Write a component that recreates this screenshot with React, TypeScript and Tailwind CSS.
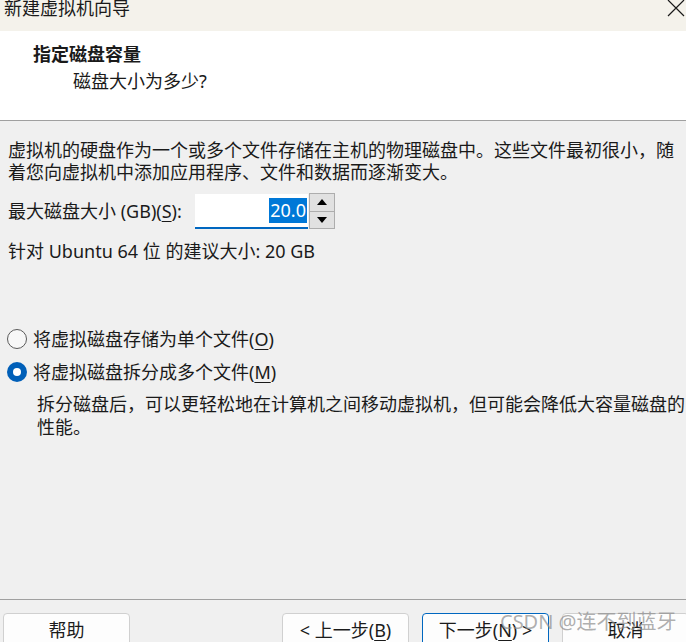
import React from "react";

const font = "font-['Noto_Sans','Noto_Sans_CJK_SC',sans-serif]";

function Mnemonic({ children }: { children: React.ReactNode }) {
  return <span className="underline underline-offset-[3px] decoration-1">{children}</span>;
}

function Radio({ checked, children }: { checked?: boolean; children: React.ReactNode }) {
  return (
    <div className="flex h-[22px] items-center">
      <span
        className={`ml-[7px] flex h-[20px] w-[20px] items-center justify-center rounded-full ${
          checked ? "bg-[#005fb8]" : "border border-[#5a5a5a] bg-[#f7f7f7]"
        }`}
      >
        {checked && <span className="h-[8px] w-[8px] rounded-full bg-white" />}
      </span>
      <span className="ml-[6px] whitespace-nowrap">{children}</span>
    </div>
  );
}

function WizardButton({
  children,
  focused = false,
}: {
  children: React.ReactNode;
  focused?: boolean;
}) {
  return (
    <button
      type="button"
      className={`flex h-[34px] w-[127px] shrink-0 items-center justify-center rounded-[4px] border bg-[#fdfdfd] text-[18px] leading-[22px] text-[#1b1b1b] ${
        focused ? "border-[#0067c0]" : "border-[#d0d0d0]"
      }`}
    >
      {children}
    </button>
  );
}

function SpinBox() {
  return (
    <div className="flex items-center">
      <div className="flex h-[35px] w-[113px] items-center justify-end border-b-2 border-[#0067c0] bg-white pr-[1px]">
        <span className="bg-[#0078d7] px-[1px] text-[18px] leading-[25px] text-white">20.0</span>
      </div>
      <div className="ml-[1px] flex h-[36px] w-[26px] flex-col border border-[#adadad] bg-[#e1e1e1]">
        <div className="flex flex-1 items-center justify-center border-b border-[#adadad]">
          <svg width="10" height="6" viewBox="0 0 10 6">
            <path d="M0 6 L5 0 L10 6 Z" fill="#000" />
          </svg>
        </div>
        <div className="flex flex-1 items-center justify-center">
          <svg width="10" height="6" viewBox="0 0 10 6">
            <path d="M0 0 L10 0 L5 6 Z" fill="#000" />
          </svg>
        </div>
      </div>
    </div>
  );
}

export default function App() {
  return (
    <div className={`relative flex h-[642px] w-[686px] flex-col overflow-hidden bg-[#f0f0f0] text-[18px] text-[#1a1a1a] ${font}`}>
      {/* title bar */}
      <div className="flex h-[31px] shrink-0 items-start justify-between bg-[#f4f2eb]">
        <span className="-mt-[2px] ml-[4px] leading-[20px]">新建虚拟机向导</span>
        <svg className="mr-[1px]" width="18" height="17" viewBox="0 0 18 17">
          <path d="M1 0 L17 16 M17 0 L1 16" stroke="#1a1a1a" strokeWidth="1.2" />
        </svg>
      </div>

      {/* header */}
      <div className="h-[90px] shrink-0 border-b border-[#a0a0a0] bg-white pt-[12px]">
        <div className="pl-[33px] font-bold leading-[22px]">指定磁盘容量</div>
        <div className="mt-[5px] pl-[73px] leading-[22px]">磁盘大小为多少?</div>
      </div>

      {/* body */}
      <div className="flex-1 px-[8px]">
        <p className="mt-[18px] whitespace-nowrap leading-[22px]">
          虚拟机的硬盘作为一个或多个文件存储在主机的物理磁盘中。这些文件最初很小，随
          <br />
          着您向虚拟机中添加应用程序、文件和数据而逐渐变大。
        </p>

        <div className="mt-[10px] flex items-center">
          <span className="w-[187px] whitespace-nowrap">
            最大磁盘大小 (GB)(<Mnemonic>S</Mnemonic>):
          </span>
          <span className="ml-[0px]">
            <SpinBox />
          </span>
        </div>

        <div className="mt-[11px] leading-[22px]">针对 Ubuntu 64 位 的建议大小: 20 GB</div>

        <div className="-ml-[8px] mt-[66px]">
          <Radio>
            将虚拟磁盘存储为单个文件(<Mnemonic>O</Mnemonic>)
          </Radio>
          <div className="mt-[11px]">
            <Radio checked>
              将虚拟磁盘拆分成多个文件(<Mnemonic>M</Mnemonic>)
            </Radio>
          </div>
          <p className="mt-[10px] whitespace-nowrap pl-[37px] leading-[23px]">
            拆分磁盘后，可以更轻松地在计算机之间移动虚拟机，但可能会降低大容量磁盘的
            <br />
            性能。
          </p>
        </div>
      </div>

      {/* footer */}
      <div className="flex h-[43px] shrink-0 items-start gap-[13px] border-t border-[#a0a0a0] pt-[13px]">
        <div className="ml-[3px]">
          <WizardButton>帮助</WizardButton>
        </div>
        <div className="ml-[139px]">
          <WizardButton>
            &lt; 上一步(<Mnemonic>B</Mnemonic>)
          </WizardButton>
        </div>
        <WizardButton focused>
          下一步(<Mnemonic>N</Mnemonic>) &gt;
        </WizardButton>
        <WizardButton>取消</WizardButton>
      </div>

      {/* watermark */}
      <div className="pointer-events-none absolute left-[500px] top-[609px] whitespace-nowrap text-[20px] leading-[26px] text-[#8c8c8c]/70">
        CSDN @连不到蓝牙
      </div>
    </div>
  );
}
